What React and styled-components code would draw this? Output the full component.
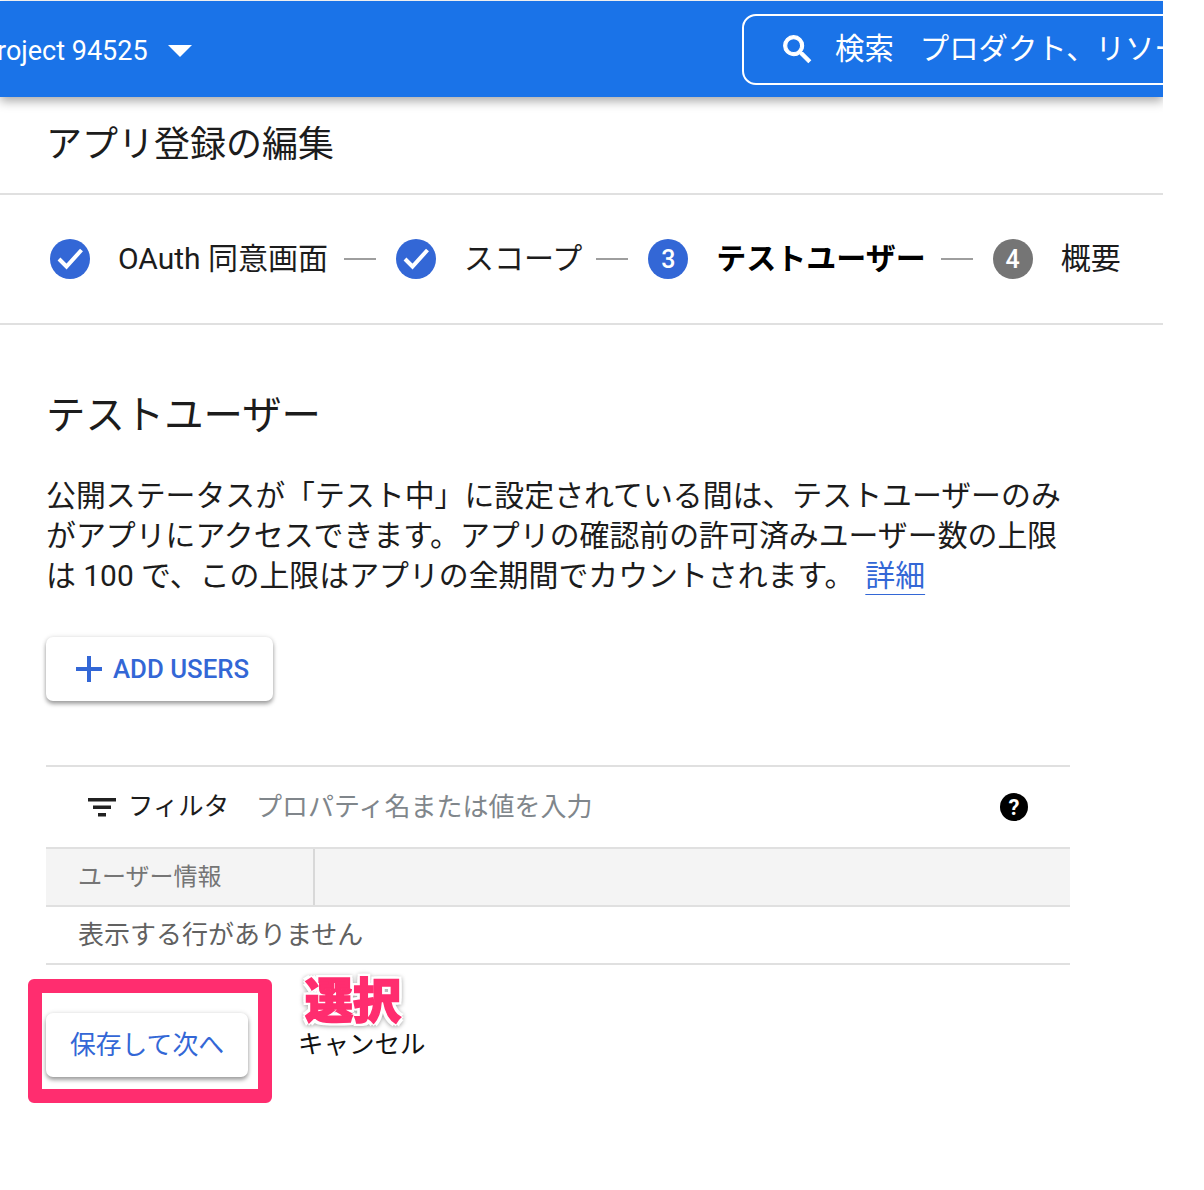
import React from 'react'
import styled, { createGlobalStyle } from 'styled-components'

const Global = createGlobalStyle`
  html, body { margin: 0; padding: 0; background: #fff; }
  body { font-family: Roboto, "Noto Sans CJK JP", sans-serif; color: #1c1c1c; }
`

const Page = styled.div`
  position: relative;
  width: 1163px;
  height: 1190px;
  overflow: hidden;
  background: #fff;
`
const Header = styled.header`
  display: flex;
  align-items: center;
  justify-content: space-between;
  height: 96px;
  margin-top: 1px;
  background: #1a73e8;
  box-shadow: 0 4px 10px rgba(0, 0, 0, 0.35);
  position: relative;
  color: #fff;
`
const ProjectName = styled.div`
  display: flex;
  align-items: center;
  margin-left: -20px;
  padding-top: 4px;
  font-size: 27px;
  white-space: nowrap;
`
const Caret = styled.span`
  width: 0;
  height: 0;
  margin-left: 20px;
  border-left: 12px solid transparent;
  border-right: 12px solid transparent;
  border-top: 12px solid #fff;
`
const SearchBox = styled.div`
  display: flex;
  align-items: center;
  flex: none;
  width: 500px;
  height: 71px;
  margin-right: -79px;
  padding-left: 35px;
  box-sizing: border-box;
  border: 2px solid #fff;
  border-radius: 14px;
  font-size: 29.4px;
  white-space: nowrap;
  overflow: hidden;
`
const SearchIcon = styled.svg`
  width: 37px;
  height: 37px;
  flex: none;
  fill: #fff;
  stroke: #fff;
  stroke-width: 0.7;
`
const SearchText = styled.span`
  padding-bottom: 6px;
`
const SearchLabel = styled.span`
  margin-left: 19px;
  margin-right: 26px;
`
const TitleBar = styled.div`
  box-sizing: border-box;
  height: 98px;
  padding: 0 0 9px 46px;
  display: flex;
  align-items: center;
  border-bottom: 2px solid #e0e0e0;
  font-size: 36px;
`
const Stepper = styled.div`
  display: flex;
  align-items: center;
  height: 128px;
  padding-left: 50px;
  border-bottom: 2px solid #e0e0e0;
  font-size: 30px;
  white-space: nowrap;
`
const StepDot = styled.span`
  display: inline-flex;
  align-items: center;
  justify-content: center;
  width: 40px;
  height: 40px;
  flex: none;
  border-radius: 50%;
  background: ${p => (p.$muted ? '#757575' : '#3367d6')};
  color: #fff;
  font-size: 25px;
  font-weight: 500;
`
const StepLabel = styled.span`
  margin-left: ${p => p.$gap}px;
  padding-bottom: 6px;
  font-weight: ${p => (p.$active ? 700 : 400)};
  color: ${p => (p.$active ? '#000' : 'inherit')};
`
const StepLine = styled.span`
  width: 32px;
  height: 2px;
  flex: none;
  margin: 0 ${p => p.$right}px 0 ${p => p.$left}px;
  background: #9e9e9e;
`
const Content = styled.main`
  padding: 66px 93px 0 46px;
`
const Heading = styled.h2`
  margin: 0;
  font-size: 39.4px;
  font-weight: 400;
  line-height: 50px;
`
const Intro = styled.p`
  margin: 35px 0 0;
  font-size: 29.9px;
  line-height: 40px;
`
const MoreLink = styled.a`
  margin-left: 11px;
  color: #3367d6;
  text-decoration: underline;
  text-underline-offset: 8px;
  text-decoration-thickness: 1px;
`
const AddButton = styled.button`
  display: flex;
  align-items: center;
  gap: 11px;
  width: 227px;
  height: 64px;
  margin-top: 41px;
  padding: 0 0 0 30px;
  border: 0;
  border-radius: 7px;
  background: #fff;
  box-shadow: 0 3px 4px rgba(0, 0, 0, 0.35), 0 0 5px rgba(0, 0, 0, 0.12);
  color: #3367d6;
  font-family: inherit;
  font-size: 25.8px;
  font-weight: 500;
`
const PlusIcon = styled.svg`
  width: 26px;
  height: 26px;
  flex: none;
  fill: #3367d6;
`
const FilterBar = styled.div`
  display: flex;
  align-items: center;
  height: 80px;
  margin-top: 64px;
  padding: 0 42px 0 41px;
  border-top: 2px solid #e0e0e0;
  font-size: 25.4px;
`
const FilterIcon = styled.svg`
  width: 30px;
  height: 20px;
  margin-right: 11px;
  flex: none;
`
const FilterLabel = styled.span`
  padding-bottom: 6px;
`
const FilterHint = styled.span`
  margin-left: 27px;
  padding-bottom: 6px;
  flex: 1;
  color: #80868b;
  font-size: 26px;
`
const HelpIcon = styled.span`
  display: flex;
  align-items: center;
  justify-content: center;
  width: 28px;
  height: 28px;
  border-radius: 50%;
  background: #000;
  color: #fff;
  font-size: 22px;
  font-weight: 700;
`
const TableHead = styled.div`
  display: flex;
  height: 56px;
  background: #f4f4f4;
  border-top: 2px solid #e0e0e0;
  border-bottom: 2px solid #e0e0e0;
`
const HeadCell = styled.div`
  display: flex;
  align-items: center;
  width: 269px;
  padding: 0 0 6px 32px;
  box-sizing: border-box;
  border-right: 2px solid #d8d8d8;
  color: #757575;
  font-size: 24px;
`
const EmptyRow = styled.div`
  display: flex;
  align-items: center;
  box-sizing: border-box;
  height: 58px;
  padding: 0 0 6px 32px;
  border-bottom: 2px solid #e0e0e0;
  color: #616161;
  font-size: 26px;
`
const Actions = styled.div`
  display: flex;
  align-items: center;
  gap: 50px;
  margin-top: 48px;
`
const SaveButton = styled.button`
  width: 202px;
  height: 64px;
  padding: 0 0 6px;
  border: 0;
  border-radius: 7px;
  background: #fff;
  box-shadow: 0 3px 4px rgba(0, 0, 0, 0.35), 0 0 5px rgba(0, 0, 0, 0.12);
  color: #3367d6;
  font-family: inherit;
  font-size: 25.8px;
`
const CancelText = styled.span`
  padding-bottom: 8px;
  font-size: 25.5px;
  color: #111;
`
const Highlight = styled.div`
  position: absolute;
  left: 28px;
  top: 979px;
  width: 244px;
  height: 124px;
  box-sizing: border-box;
  border: 14px solid #ff2d6f;
  border-radius: 6px;
`
const Callout = styled.div`
  position: absolute;
  left: 305px;
  top: 970px;
  color: #ff2d6f;
  font-size: 48px;
  font-weight: 900;
  line-height: 64px;
  -webkit-text-stroke: 1.5px #ff2d6f;
  text-shadow:
    3px 0 0 #fff, -3px 0 0 #fff, 0 3px 0 #fff, 0 -3px 0 #fff,
    3px 3px 0 #fff, -3px -3px 0 #fff, 3px -3px 0 #fff, -3px 3px 0 #fff;
  filter: drop-shadow(0 1px 2px rgba(0, 0, 0, 0.35));
`

const Check = () => (
  <svg width="40" height="40" viewBox="0 0 40 40" fill="none">
    <path d="M9 20l7.500 7.500L31.500 11" stroke="#fff" strokeWidth="4" />
  </svg>
)

const App = () => {
  return (
    <Page>
      <Global />
      <Header>
        <ProjectName>
          Project 94525
          <Caret />
        </ProjectName>
        <SearchBox>
          <SearchIcon viewBox="0 0 24 24">
            <path d="M15.500 14h-.79l-.28-.27A6.471 6.471 0 0 0 16 9.500 6.500 6.500 0 1 0 9.500 16c1.610 0 3.090-.59 4.230-1.570l.27.28v.79l5 4.990L20.490 19l-4.990-5zm-6 0C7.010 14 5 11.990 5 9.500S7.010 5 9.500 5 14 7.010 14 9.500 11.990 14 9.500 14z" />
          </SearchIcon>
          <SearchText>
            <SearchLabel>検索</SearchLabel>
            プロダクト、リソース
          </SearchText>
        </SearchBox>
      </Header>
      <TitleBar>アプリ登録の編集</TitleBar>
      <Stepper>
        <StepDot><Check /></StepDot>
        <StepLabel $gap={28}>OAuth 同意画面</StepLabel>
        <StepLine $left={16} $right={20} />
        <StepDot><Check /></StepDot>
        <StepLabel $gap={28}>スコープ</StepLabel>
        <StepLine $left={14} $right={20} />
        <StepDot>3</StepDot>
        <StepLabel $gap={28} $active>テストユーザー</StepLabel>
        <StepLine $left={15} $right={20} />
        <StepDot $muted>4</StepDot>
        <StepLabel $gap={28}>概要</StepLabel>
      </Stepper>
      <Content>
        <Heading>テストユーザー</Heading>
        <Intro>
          公開ステータスが「テスト中」に設定されている間は、テストユーザーのみがアプリにアクセスできます。アプリの確認前の許可済みユーザー数の上限は 100 で、この上限はアプリの全期間でカウントされます。
          <MoreLink href="#">詳細</MoreLink>
        </Intro>
        <AddButton>
          <PlusIcon viewBox="0 0 26 26">
            <path d="M11 0h4v11h11v4H15v11h-4V15H0v-4h11z" />
          </PlusIcon>
          ADD USERS
        </AddButton>
        <FilterBar>
          <FilterIcon viewBox="0 0 30 20">
            <path d="M1 1h28v3.500H1zM6 8.500h18V12H6zM11 16h8v3.500h-8z" fill="#212121" />
          </FilterIcon>
          <FilterLabel>フィルタ</FilterLabel>
          <FilterHint>プロパティ名または値を入力</FilterHint>
          <HelpIcon>?</HelpIcon>
        </FilterBar>
        <TableHead>
          <HeadCell>ユーザー情報</HeadCell>
        </TableHead>
        <EmptyRow>表示する行がありません</EmptyRow>
        <Actions>
          <SaveButton>保存して次へ</SaveButton>
          <CancelText>キャンセル</CancelText>
        </Actions>
      </Content>
      <Highlight />
      <Callout>選択</Callout>
    </Page>
  )
}

export default App
